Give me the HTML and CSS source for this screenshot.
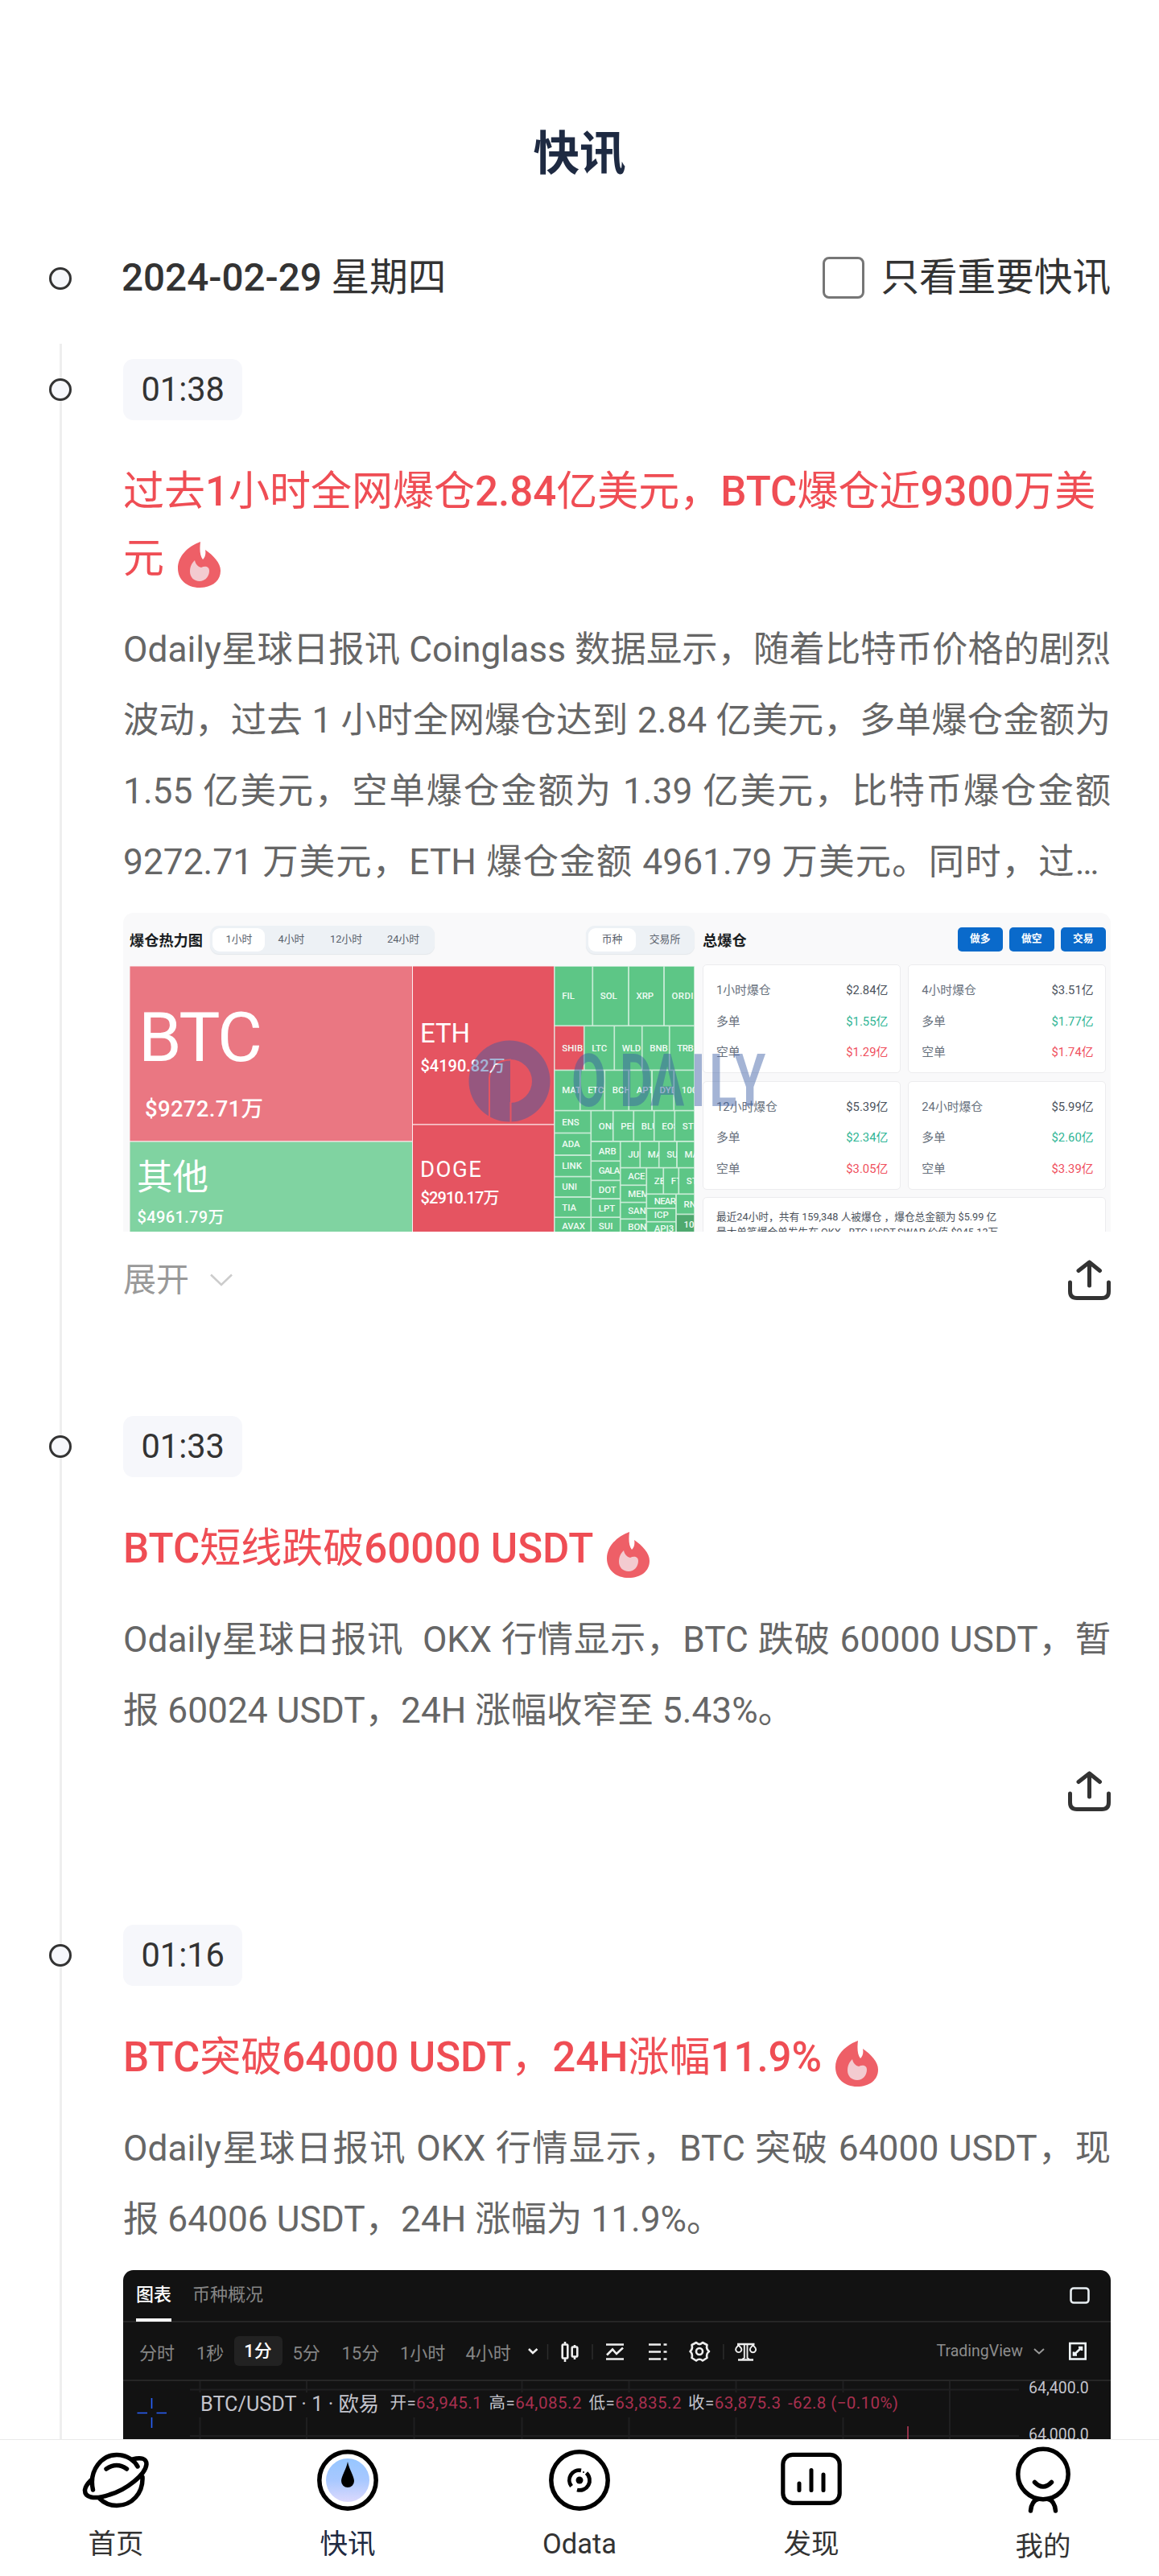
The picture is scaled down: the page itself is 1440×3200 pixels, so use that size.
FILE: index.html
```html
<!DOCTYPE html>
<html lang="zh-CN">
<head>
<meta charset="utf-8">
<title>快讯</title>
<link rel="stylesheet" href="styles.css">
</head>
<body>
<svg class="defs" width="0" height="0" aria-hidden="true">
  <symbol id="flame" viewBox="0 0 53 57">
    <path fill="#ee5f67" d="M28 0C27 8 27 17 31 22C34 19 35 15 34 10C44 17 53 26 53 36C53 49 42 57 27 57C11 57 0 47 0 33C0 18 12 6 28 0Z"/>
    <path fill="#f3cbd0" d="M21 23C22 28 25 31 29 32C33 30 39 30 39 36C39 43 34 49 27 49C20 49 15 44 15 37C15 31 17 27 21 23Z"/>
  </symbol>
  <symbol id="share" viewBox="0 0 53 51">
    <path fill="none" stroke="#333" stroke-width="5" stroke-linecap="round" stroke-linejoin="round" d="M2.500 28V39Q2.500 47.500 11 47.500H42Q50.500 47.500 50.500 39V28M26.500 32V3M13 13.500L26.500 3L39.500 13.500"/>
  </symbol>
</svg>
<div class="app">
  <header class="page-title"><h1>快讯</h1></header>
  <div class="day">
    <span class="dot"></span>
    <span class="date"><b>2024-02-29</b> 星期四</span>
    <label class="filter"><span class="checkbox"></span><span class="filter-text">只看重要快讯</span></label>
  </div>

  <main class="feed">
    <article class="entry entry-expandable">
      <div class="stamp"><span class="dot"></span><time>01:38</time></div>
      <h2>过去<b>1</b>小时全网爆仓<b>2.84</b>亿美元，<b>BTC</b>爆仓近<b>9300</b>万美元<svg class="flame"><use href="#flame"/></svg></h2>
      <p class="clamp">Odaily星球日报讯 Coinglass 数据显示，随着比特币价格的剧烈波动，过去 1 小时全网爆仓达到 2.84 亿美元，多单爆仓金额为 1.55 亿美元，空单爆仓金额为 1.39 亿美元，比特币爆仓金额 9272.71 万美元，ETH 爆仓金额 4961.79 万美元。同时，过去 24 小时共有 159348 人被爆仓。</p>
      <section class="shot heat">
        <div class="heat-map">
          <div class="heat-head">
            <strong>爆仓热力图</strong>
            <div class="seg seg-time"><span class="on">1小时</span><span>4小时</span><span>12小时</span><span>24小时</span></div>
            <div class="seg seg-kind"><span class="on">币种</span><span>交易所</span></div>
          </div>
          <svg class="tree" width="702" height="330" viewBox="0 0 702 330">
            <rect class="pink" width="351.500" height="218"/>
            <rect class="mint" y="218" width="351.500" height="113"/>
            <rect class="red" x="351.500" width="176.200" height="197"/>
            <rect class="red" x="351.500" y="197" width="176.200" height="134"/>
            <text x="11" y="118" font-size="86" textLength="154">BTC</text>
            <text x="19" y="187" font-size="27.500" class="m" textLength="147">$9272.71万</text>
            <text x="9" y="277.500" font-size="44.500">其他</text>
            <text x="9.500" y="318.800" font-size="20" class="m" textLength="108">$4961.79万</text>
            <text x="361" y="95" font-size="33" textLength="62">ETH</text>
            <text x="361.500" y="130.500" font-size="20" class="m" textLength="105">$4190.82万</text>
            <text x="361" y="261.500" font-size="27.500" textLength="76">DOGE</text>
            <text x="361.500" y="294.500" font-size="20" class="m" textLength="98">$2910.17万</text>
            <g class="cells">
              <svg x="527.700" y="0" width="47.600" height="74.300"><rect/><text x="9.500" y="50%">FIL</text></svg>
              <svg x="575.300" y="0" width="44.700" height="74.300"><rect/><text x="9.500" y="50%">SOL</text></svg>
              <svg x="620" y="0" width="44" height="74.300"><rect/><text x="9.500" y="50%">XRP</text></svg>
              <svg x="664" y="0" width="38" height="74.300"><rect/><text x="9.500" y="50%" textLength="27">ORDI</text></svg>
              <svg x="527.700" y="74.300" width="37" height="55.100"><rect class="red"/><text x="9.500" y="50%" textLength="26">SHIB</text></svg>
              <svg x="564.700" y="74.300" width="37.600" height="55.100"><rect/><text x="9.500" y="50%">LTC</text></svg>
              <svg x="602.300" y="74.300" width="34.400" height="55.100"><rect/><text x="9.500" y="50%" textLength="23.500">WLD</text></svg>
              <svg x="636.700" y="74.300" width="34" height="55.100"><rect/><text x="9.500" y="50%">BNB</text></svg>
              <svg x="670.700" y="74.300" width="31.300" height="55.100"><rect/><text x="9.500" y="50%" textLength="20.500">TRB</text></svg>
              <svg x="527.700" y="129.400" width="32" height="50.200"><rect/><text x="9.500" y="50%">MATIC</text></svg>
              <svg x="559.700" y="129.400" width="30.600" height="50.200"><rect/><text x="9.500" y="50%" textLength="20">ETC</text></svg>
              <svg x="590.300" y="129.400" width="30" height="50.200"><rect/><text x="9.500" y="50%">BCH</text></svg>
              <svg x="620.300" y="129.400" width="28.700" height="50.200"><rect/><text x="9.500" y="50%">APT</text></svg>
              <svg x="649" y="129.400" width="27.300" height="50.200"><rect/><text x="9.500" y="50%">DYDX</text></svg>
              <svg x="676.300" y="129.400" width="25.700" height="50.200"><rect/><text x="9.500" y="50%">1000</text></svg>
              <svg x="527.700" y="179.600" width="45.600" height="27.900"><rect/><text x="9.500" y="50%">ENS</text></svg>
              <svg x="527.700" y="207.500" width="45.600" height="27.500"><rect/><text x="9.500" y="50%">ADA</text></svg>
              <svg x="527.700" y="235" width="45.600" height="26.600"><rect/><text x="9.500" y="50%">LINK</text></svg>
              <svg x="527.700" y="261.600" width="45.600" height="25.400"><rect/><text x="9.500" y="50%">UNI</text></svg>
              <svg x="527.700" y="287" width="45.600" height="25.200"><rect/><text x="9.500" y="50%">TIA</text></svg>
              <svg x="527.700" y="312.200" width="45.600" height="22"><rect/><text x="9.500" y="50%">AVAX</text></svg>
              <svg x="573.300" y="179.600" width="27.400" height="38.300"><rect/><text x="9.500" y="50%">ONDO</text></svg>
              <svg x="600.700" y="179.600" width="25.600" height="38.300"><rect/><text x="9.500" y="50%">PEPE</text></svg>
              <svg x="626.300" y="179.600" width="25.400" height="38.300"><rect/><text x="9.500" y="50%">BLUR</text></svg>
              <svg x="651.700" y="179.600" width="25.600" height="38.300"><rect/><text x="9.500" y="50%">EOS</text></svg>
              <svg x="677.300" y="179.600" width="24.700" height="38.300"><rect/><text x="9.500" y="50%">STRK</text></svg>
              <svg x="573.300" y="217.900" width="36.400" height="24.400"><rect/><text x="9.500" y="50%">ARB</text></svg>
              <svg x="573.300" y="242.300" width="36.400" height="24.100"><rect/><text x="9.500" y="50%" textLength="26.500">GALA</text></svg>
              <svg x="573.300" y="266.400" width="36.400" height="22.700"><rect/><text x="9.500" y="50%">DOT</text></svg>
              <svg x="573.300" y="289.100" width="36.400" height="23.100"><rect/><text x="9.500" y="50%">LPT</text></svg>
              <svg x="573.300" y="312.200" width="36.400" height="22"><rect/><text x="9.500" y="50%">SUI</text></svg>
              <svg x="609.700" y="217.900" width="24.600" height="32.700"><rect/><text x="9.500" y="50%">JUP</text></svg>
              <svg x="634.300" y="217.900" width="23.400" height="32.700"><rect/><text x="9.500" y="50%">MAN</text></svg>
              <svg x="657.700" y="217.900" width="22.300" height="32.700"><rect/><text x="9.500" y="50%">SUS</text></svg>
              <svg x="680" y="217.900" width="22" height="32.700"><rect/><text x="9.500" y="50%">MAS</text></svg>
              <svg x="609.700" y="250.600" width="32.600" height="21.700"><rect/><text x="9.500" y="50%">ACE</text></svg>
              <svg x="609.700" y="272.300" width="32.600" height="21.300"><rect/><text x="9.500" y="50%">MEME</text></svg>
              <svg x="609.700" y="293.600" width="32.600" height="20.700"><rect/><text x="9.500" y="50%">SAND</text></svg>
              <svg x="609.700" y="314.300" width="32.600" height="20"><rect/><text x="9.500" y="50%">BONK</text></svg>
              <svg x="642.300" y="250.600" width="21" height="32.700"><rect/><text x="9.500" y="50%">ZEC</text></svg>
              <svg x="663.300" y="250.600" width="19" height="32.700"><rect/><text x="9.500" y="50%">FTM</text></svg>
              <svg x="682.300" y="250.600" width="19.700" height="32.700"><rect/><text x="9.500" y="50%">STX</text></svg>
              <svg x="642.300" y="283.300" width="36.700" height="17.900"><rect/><text x="9.500" y="46%" textLength="27">NEAR</text></svg>
              <svg x="642.300" y="301.200" width="36.700" height="16.500"><rect/><text x="9.500" y="50%">ICP</text></svg>
              <svg x="642.300" y="317.700" width="36.700" height="16"><rect/><text x="9.500" y="50%">API3</text></svg>
              <svg x="679" y="283.300" width="23" height="25.100"><rect/><text x="9.500" y="50%">RNDR</text></svg>
              <svg x="679" y="308.400" width="23" height="25"><rect class="deep"/><text x="9.500" y="50%">10</text></svg>
            </g>
          </svg>
        </div>
        <div class="totals">
          <div class="totals-head"><strong>总爆仓</strong><span>做多</span><span>做空</span><span>交易</span></div>
          <div class="cards">
            <dl><dt>1小时爆仓</dt><dd>$2.84亿</dd><dt>多单</dt><dd class="up">$1.55亿</dd><dt>空单</dt><dd class="down">$1.29亿</dd></dl>
            <dl><dt>4小时爆仓</dt><dd>$3.51亿</dd><dt>多单</dt><dd class="up">$1.77亿</dd><dt>空单</dt><dd class="down">$1.74亿</dd></dl>
            <dl><dt>12小时爆仓</dt><dd>$5.39亿</dd><dt>多单</dt><dd class="up">$2.34亿</dd><dt>空单</dt><dd class="down">$3.05亿</dd></dl>
            <dl><dt>24小时爆仓</dt><dd>$5.99亿</dd><dt>多单</dt><dd class="up">$2.60亿</dd><dt>空单</dt><dd class="down">$3.39亿</dd></dl>
            <div class="note">最近24小时，共有 159,348 人被爆仓 ，爆仓总金额为 $5.99 亿<br>最大单笔爆仓单发生在 OKX - BTC-USDT-SWAP 价值 $945.13万</div>
          </div>
        </div>
        <svg class="watermark" width="372" height="104" viewBox="0 0 372 104">
          <mask id="cut">
            <circle cx="52" cy="52" r="50.500" fill="#fff"/>
            <path d="M53 25A27 27 0 0 1 53 79Z" fill="#000"/>
            <path d="M27 98V48C28 34 38 25.500 54 25.500M53.500 78V104" stroke="#000" stroke-width="2" fill="none"/>
          </mask>
          <rect width="104" height="104" mask="url(#cut)"/>
          <text transform="translate(0 83) scale(.69 1)" font-size="91" x="187 274 329 402 435 480">ODAILY</text>
        </svg>
      </section>
      <footer>
        <span class="expand">展开<svg width="28" height="16" viewBox="0 0 28 16"><path d="M1 1.500L14 14L27 1.500" fill="none" stroke="#ccc" stroke-width="2.500"/></svg></span>
        <svg class="share"><use href="#share"/></svg>
      </footer>
    </article>

    <article class="entry">
      <div class="stamp"><span class="dot"></span><time>01:33</time></div>
      <h2><b>BTC</b>短线跌破<b>60000 USDT</b><svg class="flame"><use href="#flame"/></svg></h2>
      <p>Odaily星球日报讯&nbsp; OKX 行情显示，BTC 跌破 60000 USDT，暂报 60024 USDT，24H 涨幅收窄至 5.43%。</p>
      <footer><svg class="share"><use href="#share"/></svg></footer>
    </article>

    <article class="entry">
      <div class="stamp"><span class="dot"></span><time>01:16</time></div>
      <h2><b>BTC</b>突破<b>64000 USDT</b>，<b>24H</b>涨幅<b>11.9%</b><svg class="flame"><use href="#flame"/></svg></h2>
      <p>Odaily星球日报讯 OKX 行情显示，BTC 突破 64000 USDT，现报 64006 USDT，24H 涨幅为 11.9%。</p>
      <section class="shot chart">
        <div class="tabs"><span class="on">图表</span><span>币种概况</span>
          <svg width="26" height="22" viewBox="0 0 26 22"><rect x="1.500" y="1.500" width="22" height="18" rx="3.500" fill="none" stroke="#e8eef2" stroke-width="2.600"/></svg>
        </div>
        <div class="tools">
          <span class="w1">分时</span><span class="w2">1秒</span><span class="on">1分</span><span class="w3">5分</span><span class="w4">15分</span><span class="w5">1小时</span><span class="w6">4小时</span>
          <svg width="534" height="36" viewBox="656 2903 534 36" fill="none" stroke="#eee" stroke-width="2.600">
            <path d="M657 2918L662 2923L667.500 2918"/>
            <path d="M680.500 2912V2931M736 2912V2931M898.800 2912V2931" stroke="#2c2c2c" stroke-width="1.500"/>
            <path d="M702 2909V2934M714 2913V2931"/><g fill="#121212"><rect x="698.700" y="2912.500" width="6.600" height="17" rx="1"/><rect x="710.700" y="2915.500" width="6.600" height="12" rx="1"/></g>
            <path d="M753 2912.500H775M753 2930.500H775M754 2925.500L761 2918.500L766 2924L774 2916.500"/>
            <path d="M806 2912.500H821M806 2921.500H821M806 2930.500H821M824.500 2912.500H828.500M824.500 2921.500H828.500M824.500 2930.500H828.500"/>
            <path d="M865 2910Q869 2914 873 2910L878.500 2913Q877 2918 881 2921Q877 2924 878.500 2929L873 2932.500Q869 2929 865 2932.500L859.500 2929Q861 2924 857.500 2921Q861 2918 859.500 2913Z" stroke-linejoin="round"/><circle cx="869" cy="2921" r="4"/>
            <path d="M916 2912H937.500M917 2931.500H936"/><path d="M924.800 2912V2929L922 2931M928.500 2912V2929L931 2931M917.500 2913L914.500 2917A3.600 3.600 0 1 0 921 2917ZM935.500 2913L932.300 2917A3.600 3.600 0 1 0 938.700 2917Z" stroke-width="1.900"/>
          </svg>
          <span class="vendor">TradingView</span>
          <svg class="more" width="14" height="8" viewBox="0 0 14 8"><path d="M1 1L7 6.500L13 1" fill="none" stroke="#999" stroke-width="2"/></svg>
          <svg width="22" height="24" viewBox="0 0 22 24" fill="none" stroke="#eef4f8" stroke-width="2.600"><rect x="1.300" y="2" width="19.400" height="19.500"/><path d="M12 7H16V11M16 7L6 16.500M6 12.500V16.500H10"/></svg>
        </div>
        <svg class="plot" width="1227" height="73" viewBox="153 2957 1227 73">
          <path class="grid" d="M236 2967.500H1266M236 3025H1266M248.500 2957V2971M381 2957V2971M514.500 2957V2971M648.500 2957V2971M781.500 2957V2971M914.500 2957V2971M1047.500 2957V2971M1180 2957V3030M248.500 3002V3030M381 3002V3030M514.500 3002V3030M648.500 3002V3030M781.500 3002V3030M914.500 3002V3030M1047.500 3002V3030"/>
          <path d="M188.500 2978V2991M188.500 3002V3015M170.500 2996.500H183M194.500 2996.500H207" stroke="#2962ff" stroke-width="1.600"/>
          <path d="M1128 3013V3030" stroke="#b33a58" stroke-width="1.600"/>
          <text x="249" y="2994" font-size="25.500" textLength="222" lengthAdjust="spacingAndGlyphs">BTC/USDT · 1 · 欧易</text>
          <g font-size="20.500">
            <text x="484.500" y="2991.300" textLength="114">开=<tspan>63,945.1</tspan></text>
            <text x="607.500" y="2991.300" textLength="115">高=<tspan>64,085.2</tspan></text>
            <text x="731.500" y="2991.300" textLength="115">低=<tspan>63,835.2</tspan></text>
            <text x="855" y="2991.300" textLength="115">收=<tspan>63,875.3</tspan></text>
            <text x="979" y="2991.300" textLength="137"><tspan>-62.8 (−0.10%)</tspan></text>
            <text x="1278" y="2971.700" font-size="19.500">64,400.0</text>
            <text x="1278" y="3030" font-size="19.500">64,000.0</text>
          </g>
        </svg>
      </section>
    </article>
  </main>

  <nav>
    <a><svg width="84" height="84" viewBox="102 3039 84 84" fill="none" stroke="#000" stroke-width="5.500" stroke-linecap="round"><path d="M115.500 3093C110 3068 127 3049.500 145 3049.500C159 3049.500 168 3058 171 3064M177 3077C178 3097 164 3112.500 145 3112.500C136 3112.500 129 3109 124 3104M165 3055C175 3052 182 3054 182 3061C181 3074 157 3093 136 3099C116 3106 105 3102 105.500 3093C106 3089 109 3085 113 3081M132 3067Q145 3058 157.500 3067"/></svg>首页</a>
    <a class="current"><svg width="84" height="84" viewBox="390 3039 84 84"><defs><linearGradient id="sky" x1="0" y1="0" x2="0" y2="1"><stop offset="0" stop-color="#96c6ff"/><stop offset=".5" stop-color="#a8c8ff"/><stop offset="1" stop-color="#dcd9fd"/></linearGradient></defs><circle cx="432" cy="3081" r="35.200" fill="none" stroke="#000" stroke-width="5.500"/><circle cx="432" cy="3081" r="27" fill="url(#sky)"/><path d="M432 3058C434 3068 440 3076 440 3082A8 8 0 0 1 424 3082C424 3076 430 3068 432 3058Z"/></svg>快讯</a>
    <a><svg width="84" height="84" viewBox="678 3039 84 84" fill="none" stroke="#000" stroke-width="5.500"><circle cx="720" cy="3081" r="35.200"/><path d="M722 3068.800A12.300 12.300 0 0 0 710 3088.500M728.500 3072A12.300 12.300 0 0 1 717 3093" stroke-width="4.800"/><circle cx="720" cy="3081" r="4.500" fill="#000" stroke="none"/><circle cx="725" cy="3071" r="1" fill="#000" stroke="none"/></svg>Odata</a>
    <a><svg width="84" height="84" viewBox="966 3039 84 84" fill="none" stroke="#000" stroke-width="5.200" stroke-linecap="round"><rect x="972.800" y="3049.300" width="70.400" height="60" rx="12"/><path d="M993 3085V3093.500M1008 3068.500V3093.500M1023 3074V3093.500" stroke-width="5"/></svg>发现</a>
    <a class="me"><svg width="84" height="84" viewBox="1254 3039 84 84" fill="none" stroke="#000" stroke-width="5.500" stroke-linecap="round"><circle cx="1296" cy="3073.500" r="31.200"/><path d="M1285.500 3083.500Q1296 3094.500 1306.500 3083.500M1280.500 3119C1281 3111 1285 3105 1290 3104.500M1311.500 3119C1311 3111 1307 3105 1302 3104.500"/></svg>我的</a>
  </nav>
</div>
</body>
</html>
```

FILE: styles.css
```css
* { box-sizing: border-box; margin: 0; padding: 0; }

body {
  width: 1440px;
  background: #fff;
  color: #333;
  font-family: Roboto, "Noto Sans CJK SC", sans-serif;
}

.defs { position: absolute; }

.app {
  display: flex;
  flex-direction: column;
  height: 3200px;
  overflow: hidden;
}

.page-title {
  flex: none;
  height: 265px;
  padding-top: 152px;
  text-align: center;
}
.page-title h1 {
  font-size: 57.600px;
  line-height: 80px;
  font-weight: 700;
  color: #1e2a42;
}

.day {
  flex: none;
  display: flex;
  align-items: center;
  height: 162px;
  padding: 0 60px 0 61px;
  font-size: 47.600px;
}
.date { margin: -11px 0 0 62px; }
.date b { font-weight: 500; }
.filter { display: flex; align-items: center; gap: 20px; margin-left: auto; }
.filter-text { margin-top: -11px; }
.checkbox { width: 52px; height: 52px; margin-top: -2px; border: 3px solid #767676; border-radius: 8px; }

.dot {
  flex: none;
  width: 28px;
  height: 28px;
  border: 3px solid #333;
  border-radius: 50%;
  background: #f6f7fb;
}

.feed {
  flex: 1;
  min-height: 0;
  overflow: hidden;
  padding: 19px 60px 0 153px;
  background: linear-gradient(#eee, #eee) 74px 0 / 3px 100% no-repeat;
}
.entry { height: 632px; }
.entry-expandable { height: 1313px; }

.stamp { display: flex; align-items: center; gap: 64px; margin-left: -92px; }
time {
  height: 76px;
  padding: 0 22.400px;
  border-radius: 12.800px;
  background: #f6f7fb;
  font-size: 41.600px;
  line-height: 75px;
}

h2 {
  margin-top: 47px;
  font-size: 51px;
  line-height: 83.200px;
  font-weight: 400;
  color: #ef4d54;
}
h2 b { font-weight: 500; }
.flame { width: 53px; height: 57px; margin-left: 17px; vertical-align: -19px; }

.entry p {
  margin-top: 27.500px;
  font-size: 44.300px;
  line-height: 88px;
  text-align: justify;
  color: #666;
}
.clamp {
  display: -webkit-box;
  -webkit-box-orient: vertical;
  -webkit-line-clamp: 4;
  overflow: hidden;
}

.entry footer { display: flex; align-items: center; justify-content: space-between; margin-top: 31px; height: 52px; }
.entry-expandable footer { margin-top: 34px; }
.expand { display: flex; align-items: center; gap: 26px; font-size: 41px; line-height: 52px; color: #999; }
.share { width: 53px; height: 51px; margin-left: auto; }

.shot { position: relative; display: flex; width: 1227px; margin-top: 19.500px; overflow: hidden; }

/* liquidation heat map */
.heat { height: 396px; border-radius: 12.800px 12.800px 0 0; background: #f9f9fa; }
.heat-map { width: 702px; margin-left: 8px; }
.heat-head { display: flex; align-items: center; height: 66px; color: #181c20; }
.heat-head strong, .totals-head strong { font-size: 18.200px; font-weight: 700; white-space: nowrap; }
.seg {
  display: flex;
  height: 35px;
  padding: 3px;
  border-radius: 11px;
  background: #edf1f5;
  box-shadow: 0 1px 1px #e3e7ea;
  font-size: 12.800px;
  line-height: 28px;
  color: #59616c;
}
.seg span { flex: none; width: 65px; text-align: center; }
.seg .on { border-radius: 9px; background: #fff; }
.seg-time { width: 279px; margin-left: 9.500px; }
.seg-time span:nth-child(n+3) { width: 71px; }
.seg-kind { width: 135px; margin-left: auto; }
.seg-kind .on { width: 59px; }
.seg-kind span:last-child { width: 72px; }

.tree { display: block; fill: #fff; }
.tree > rect { stroke: #fbeef0; stroke-width: 1; }
.tree .m { font-weight: 500; }
.pink { fill: #ea7782; }
.mint { fill: #80d3a1; }
.red, .cells .red { fill: #e55461; }
.cells rect { width: 100%; height: 100%; fill: #5dc686; stroke: #d7f1e1; stroke-width: 1.600; }
.cells .deep { fill: #4fa96f; }
.cells text { font-size: 11.400px; font-weight: 500; dominant-baseline: central; fill: #f0fbf4; }

.totals { width: 501px; margin-left: 10px; }
.totals-head { display: flex; align-items: center; gap: 7.500px; height: 64px; padding-top: 2px; }
.totals-head strong { margin-right: auto; color: #181c20; }
.totals-head span {
  width: 56.500px;
  height: 30px;
  border-radius: 5px;
  background: #0a6acb;
  color: #fff;
  font-size: 12.800px;
  font-weight: 700;
  line-height: 28px;
  text-align: center;
}
.cards { display: grid; grid-template-columns: 1fr 1fr; gap: 9.500px; }
.cards dl, .note { border: 1px solid #ececee; border-radius: 5px; background: #fff; }
.cards dl {
  display: grid;
  grid-template-columns: 1fr auto;
  grid-auto-rows: 38.300px;
  height: 135px;
  padding: 12px 14.500px 0 16px;
  font-size: 14.800px;
  line-height: 38.300px;
}
dt { color: #67707c; }
dd { color: #4b525c; }
.up { color: #2fb595; }
.down { color: #f0505e; }
.note { grid-column: span 2; height: 90px; padding: 14px 16px; font-size: 12.700px; line-height: 19px; color: #4b525c; white-space: nowrap; }

.watermark { position: absolute; left: 428px; top: 157px; fill: #375ba4; opacity: .45; font-weight: 700; }

/* exchange chart */
.chart { flex-direction: column; height: 300px; border-radius: 12.800px 12.800px 0 0; background: #121212; color: #858585; font-size: 22px; }
.tabs { display: flex; align-items: center; gap: 26px; height: 65px; padding: 0 25px 0 16px; border-bottom: 2px solid #262626; }
.tabs span { height: 65px; line-height: 63px; }
.tabs .on { border-bottom: 4px solid #fff; color: #fff; font-weight: 500; }
.tabs svg { margin-left: auto; }
.tools { display: flex; align-items: center; height: 73px; padding: 0 30px 0 20px; border-bottom: 2px solid #262626; white-space: nowrap; }
.tools span { flex: none; }
.tools .on { width: 60px; height: 37px; border-radius: 6px; background: #222; color: #fff; font-weight: 500; line-height: 37px; text-align: center; }
.w1 { width: 71px; }
.w2 { width: 46.500px; }
.w3 { width: 74px; padding-left: 13px; }
.w4 { width: 72.500px; }
.w5 { width: 81.500px; }
.w6 { width: 77px; }
.tools svg { flex: none; }
.tools .vendor { margin-left: -26px; font-size: 19.500px; color: #8d8d8d; }
.tools .more { margin: 0 auto 0 13px; }
.plot { display: block; fill: #c3c4cc; }
.plot tspan { fill: #a8304f; }
.grid { fill: none; stroke: #1f1f20; stroke-width: 2; }

nav {
  position: relative;
  flex: none;
  display: flex;
  height: 170px;
  border-top: 1px solid #eaeaea;
  background: #fff;
}
nav a { flex: 1; display: flex; flex-direction: column; align-items: center; padding-top: 8px; font-size: 34.500px; line-height: 50px; }
nav svg { margin-bottom: 12px; }
nav .current { color: #1e2a42; }
nav .me svg { margin-bottom: 15px; }
```
